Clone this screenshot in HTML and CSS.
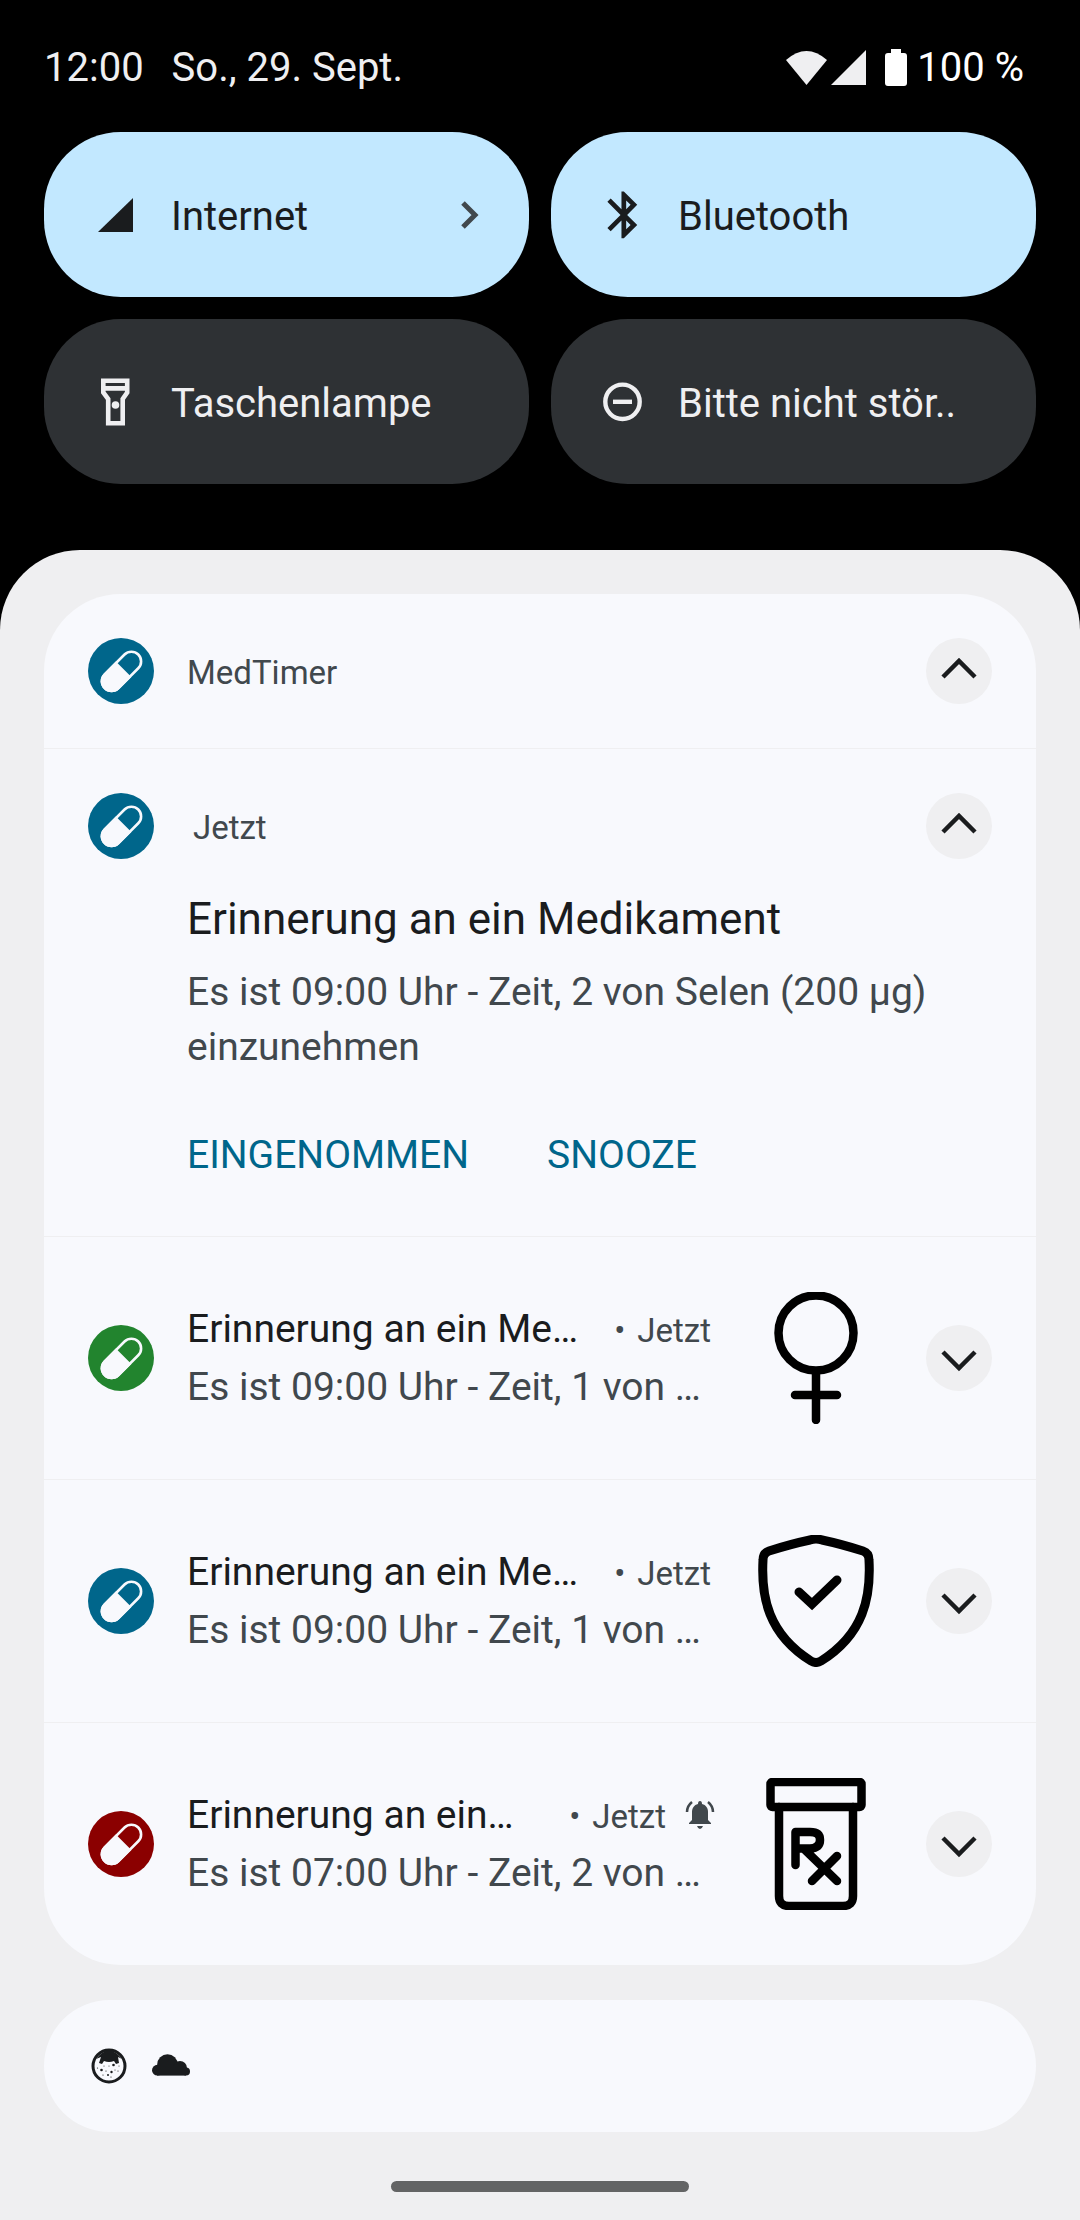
FILE: index.html
```html
<!DOCTYPE html>
<html lang="de">
<head>
<meta charset="utf-8">
<meta name="viewport" content="width=device-width, initial-scale=1">
<title>Benachrichtigungen</title>
<link rel="stylesheet" href="styles.css">
</head>
<body>
<svg class="sprite" aria-hidden="true">
  <symbol id="pill" viewBox="0 0 66 66">
    <g transform="translate(33.500 33.300) rotate(45)">
      <rect x="-9.700" y="-23.700" width="19.400" height="47.400" rx="9.700" fill="none" stroke="#f8f9fd" stroke-width="2.600"/>
      <path fill="#f8f9fd" d="M-11 -3H11V14A11 11 0 0 1 -11 14Z"/>
    </g>
  </symbol>
  <symbol id="chevron-up" viewBox="0 0 66 66"><path d="M17 39L33 23L49 39" fill="none" stroke="#1a1c1e" stroke-width="4.500"/></symbol>
  <symbol id="chevron-down" viewBox="0 0 66 66"><path d="M17 27L33 43L49 27" fill="none" stroke="#1a1c1e" stroke-width="4.500"/></symbol>
</svg>

<header class="status">
  <div class="clock"><time>12:00</time><span>So., 29. Sept.</span></div>
  <div class="system">
    <svg width="42" height="36" viewBox="0 0 42 36" aria-label="WLAN"><path fill="#efeff1" d="M0 10Q20.500 -8 41 10L20.500 35Z"/></svg>
    <svg class="signal" width="35" height="36" viewBox="0 0 35 36" aria-label="Mobilfunk"><path fill="#efeff1" d="M0 35L35 0V35Z"/></svg>
    <svg class="battery" width="22" height="38" viewBox="0 0 22 38" aria-label="Akku"><path fill="#fff" d="M6 0h10v4h3q3 0 3 3v27q0 3-3 3H3q-3 0-3-3V7q0-3 3-3h3z"/></svg>
    <span>100 %</span>
  </div>
</header>

<section class="tiles" aria-label="Schnelleinstellungen">
  <button class="tile on" type="button">
    <svg width="50" height="50" viewBox="0 0 50 50"><path fill="#1a1c1e" d="M7 42L42 8V42Z"/></svg>
    <span class="label">Internet</span>
    <svg class="more" width="50" height="50" viewBox="0 0 50 50"><path d="M18 13L30 25L18 37" fill="none" stroke="#41484d" stroke-width="5"/></svg>
  </button>
  <button class="tile on" type="button">
    <svg width="50" height="50" viewBox="1 1.400 21.300 21.300"><path fill="#1a1c1e" d="M17.710 7.710L12 2h-1v7.590L6.410 5 5 6.410 10.590 12 5 17.590 6.410 19 11 14.410V22h1l5.710-5.710-4.300-4.290 4.300-4.290zM13 5.830l1.880 1.880L13 9.590V5.830zm1.880 10.460L13 18.170v-3.760l1.880 1.880z"/></svg>
    <span class="label">Bluetooth</span>
  </button>
  <button class="tile" type="button">
    <svg width="50" height="50" viewBox="0 0 50 50"><path d="M12.300 3.800H36.200V15.500L31.700 22V46.200H17.200V22L12.300 15.500ZM12.300 11.400H36.200" fill="none" stroke="#efeff1" stroke-width="4.600"/><circle cx="24.500" cy="28" r="3.800" fill="#efeff1"/></svg>
    <span class="label">Taschenlampe</span>
  </button>
  <button class="tile" type="button">
    <svg width="50" height="50" viewBox="0 0 50 50"><circle cx="24.500" cy="24.800" r="17.200" fill="none" stroke="#efeff1" stroke-width="4.400"/><path d="M15 24.800H34" stroke="#efeff1" stroke-width="4.400"/></svg>
    <span class="label">Bitte nicht stör..</span>
  </button>
</section>

<main class="panel">
  <section class="card group">
    <header class="head">
      <span class="badge blue"><svg><use href="#pill"/></svg></span>
      <span class="small">MedTimer</span>
      <button class="toggle" type="button" aria-label="Gruppe minimieren"><svg><use href="#chevron-up"/></svg></button>
    </header>
    <article class="expanded">
      <div class="head">
        <span class="badge blue"><svg><use href="#pill"/></svg></span>
        <span class="small when">Jetzt</span>
        <button class="toggle" type="button" aria-label="Minimieren"><svg><use href="#chevron-up"/></svg></button>
      </div>
      <div class="body">
        <h2>Erinnerung an ein Medikament</h2>
        <p>Es ist 09:00 Uhr - Zeit, 2 von Selen (200 µg) einzunehmen</p>
        <div class="actions">
          <button type="button">EINGENOMMEN</button>
          <button type="button">SNOOZE</button>
        </div>
      </div>
    </article>
    <article class="row">
      <span class="badge green"><svg><use href="#pill"/></svg></span>
      <div class="text">
        <div class="top"><h3>Erinnerung an ein Me…</h3><div class="small since"><span>•</span><span>Jetzt</span></div></div>
        <p>Es ist 09:00 Uhr - Zeit, 1 von …</p>
      </div>
      <svg class="picture" viewBox="0 0 132 132"><g fill="none" stroke="#000" stroke-width="8.500" stroke-linecap="round"><circle cx="66" cy="41" r="37.500"/><path d="M66 80V128M45 103H87"/></g></svg>
      <button class="toggle" type="button" aria-label="Maximieren"><svg><use href="#chevron-down"/></svg></button>
    </article>
    <article class="row">
      <span class="badge blue"><svg><use href="#pill"/></svg></span>
      <div class="text">
        <div class="top"><h3>Erinnerung an ein Me…</h3><div class="small since"><span>•</span><span>Jetzt</span></div></div>
        <p>Es ist 09:00 Uhr - Zeit, 1 von …</p>
      </div>
      <svg class="picture" viewBox="0 0 132 132"><g fill="none" stroke="#000" stroke-width="9" stroke-linecap="round" stroke-linejoin="round"><path d="M60 5Q66 3 72 5Q91 9 113 16Q119 18 119 25C121 62 114 99 71 126Q66 129 61 126C18 99 11 62 13 25Q13 18 19 16Q41 9 60 5Z"/><path stroke-linejoin="miter" d="M49 57L62 69L87 45"/></g></svg>
      <button class="toggle" type="button" aria-label="Maximieren"><svg><use href="#chevron-down"/></svg></button>
    </article>
    <article class="row">
      <span class="badge red"><svg><use href="#pill"/></svg></span>
      <div class="text">
        <div class="top"><h3>Erinnerung an ein…</h3><div class="small since"><span>•</span><span>Jetzt</span></div>
          <svg class="bell" width="30" height="30" viewBox="0 0 30 30" aria-label="Ton"><path fill="#41484d" d="M15 1q2 0 2 3c4 1 6 4 6 8v8l3 3v1H4v-1l3-3v-8c0-4 2-7 6-8q0-3 2-3zM12 26h6q-1 3-3 3t-3-3z"/><path d="M2 12Q2 6 7 2M28 12Q28 6 23 2" fill="none" stroke="#41484d" stroke-width="2.500"/></svg>
        </div>
        <p>Es ist 07:00 Uhr - Zeit, 2 von …</p>
      </div>
      <svg class="picture" viewBox="0 0 132 132"><g fill="none" stroke="#000" stroke-width="8.500" stroke-linecap="round" stroke-linejoin="round"><rect x="20.500" y="4" width="91" height="25" rx="2"/><path d="M29 29V118Q29 128 39 128H93Q103 128 103 118V29"/><path d="M45.500 87V54H60Q70 54 70 62T60 70.500H46M54 71L87 103M87 78L62 103"/></g></svg>
      <button class="toggle" type="button" aria-label="Maximieren"><svg><use href="#chevron-down"/></svg></button>
    </article>
  </section>

  <section class="card silent" aria-label="Lautlos">
    <svg width="36" height="36" viewBox="0 0 36 36"><circle cx="18" cy="18" r="16" fill="none" stroke="#1a1c1e" stroke-width="3"/><path fill="#1a1c1e" d="M5 11Q18-6 31 11L27 9L28 15L25 16L23 13Q18 15 13 13L11 16L8 15L10 9Z"/><g fill="#1a1c1e"><circle cx="10.500" cy="22" r="1.300"/><circle cx="22.500" cy="17" r="1.300"/><circle cx="20.500" cy="24" r="1.200"/><circle cx="17" cy="27" r="1"/><circle cx="12" cy="27" r=".6"/><circle cx="15" cy="23" r=".6"/><circle cx="18" cy="18" r=".5"/><circle cx="27" cy="23" r=".6"/><circle cx="28" cy="18" r=".5"/><circle cx="6.500" cy="20" r=".6"/><circle cx="13" cy="18" r=".5"/><circle cx="24" cy="22" r=".5"/><circle cx="20" cy="29" r=".6"/></g></svg>
    <svg width="38" height="36" viewBox="0 0 38 36"><g fill="#1a1c1e"><circle cx="5.400" cy="22.200" r="5.400"/><circle cx="15.500" cy="16.500" r="10.300"/><circle cx="28" cy="20" r="7"/><circle cx="34" cy="23.600" r="4"/><rect x="5" y="18" width="29" height="9.600"/></g></svg>
  </section>
  <div class="home"></div>
</main>
</body>
</html>
```
FILE: styles.css
```css
* { box-sizing: border-box; }

body {
  margin: 0;
  min-height: 100vh;
  display: flex;
  flex-direction: column;
  background: #000;
  color: #1a1c1e;
  font: 39px/52px Roboto, "Noto Sans", sans-serif;
}

svg { display: block; flex: none; }
h2, h3, p { margin: 0; font-weight: 400; }
button { border: 0; padding: 0; font: inherit; color: inherit; background: none; }
.sprite { position: absolute; width: 0; height: 0; }

.status {
  display: flex;
  justify-content: space-between;
  align-items: center;
  padding: 42px 56px 38px 44px;
  font-size: 40px;
  color: #efeff1;
}
.clock { display: flex; gap: 28px; }
.system { display: flex; align-items: center; color: #fff; }
.signal { margin-left: 3px; }
.battery { margin: 0 10px 0 19px; }

.tiles {
  display: grid;
  grid-template-columns: 1fr 1fr;
  gap: 22px;
  padding: 0 44px 66px;
}
.tile {
  display: flex;
  align-items: center;
  gap: 30px;
  height: 165px;
  padding: 0 34px 0 47px;
  border-radius: 77px;
  background: #2e3134;
  color: #efeff1;
  font-size: 40px;
  text-align: left;
}
.tile.on { background: #c2e8ff; color: #1a1c1e; }
.label { flex: 1; padding-top: 4px; white-space: nowrap; }

.panel {
  flex: 1;
  padding: 44px 44px 27px;
  border-radius: 80px 80px 0 0;
  background: #efeff1;
}
.card { background: #f8f9fd; }
.group { border-radius: 77px; }
.group > * + * { border-top: 1px solid #efeff1; }

.head {
  display: flex;
  align-items: center;
  gap: 33px;
  padding: 44px;
}
.small { font-size: 33px; line-height: 44px; color: #41484d; }
.head .small { flex: 1; padding-top: 4px; }
.head .when { padding-left: 6px; }

.badge, .toggle { flex: none; width: 66px; height: 66px; border-radius: 50%; }
.badge svg, .toggle svg { width: 66px; height: 66px; }
.blue { background: #00668b; }
.green { background: #22842e; }
.red { background: #8b0000; }
.toggle { background: #efeff1; }

.expanded .head { padding-bottom: 22px; }
.body { padding: 8px 100px 55px 143px; color: #41484d; }
.body h2 { font-size: 44px; line-height: 60px; color: #1a1c1e; }
.body p { padding-top: 16px; line-height: 55px; }
.actions { display: flex; gap: 78px; padding-top: 54px; color: #00668b; }

.row {
  display: flex;
  align-items: center;
  height: 243px;
  padding: 0 44px;
}
.text { flex: 1; padding: 0 35px 0 33px; }
.top { display: flex; align-items: center; }
.top h3 { flex: 1; font-size: 39px; line-height: 58px; white-space: nowrap; }
.since { display: flex; gap: 12px; padding: 4px 4px 0 0; }
.bell { margin-left: 15px; }
.text p { line-height: 58px; color: #41484d; white-space: nowrap; }
.picture { width: 132px; height: 132px; margin-right: 44px; }

.silent {
  display: flex;
  align-items: center;
  gap: 25px;
  height: 132px;
  margin-top: 35px;
  padding: 0 47px;
  border-radius: 66px;
}
.home {
  width: 30%;
  height: 11px;
  margin: 49px auto 0;
  border-radius: 6px;
  background: #636465;
}
```
